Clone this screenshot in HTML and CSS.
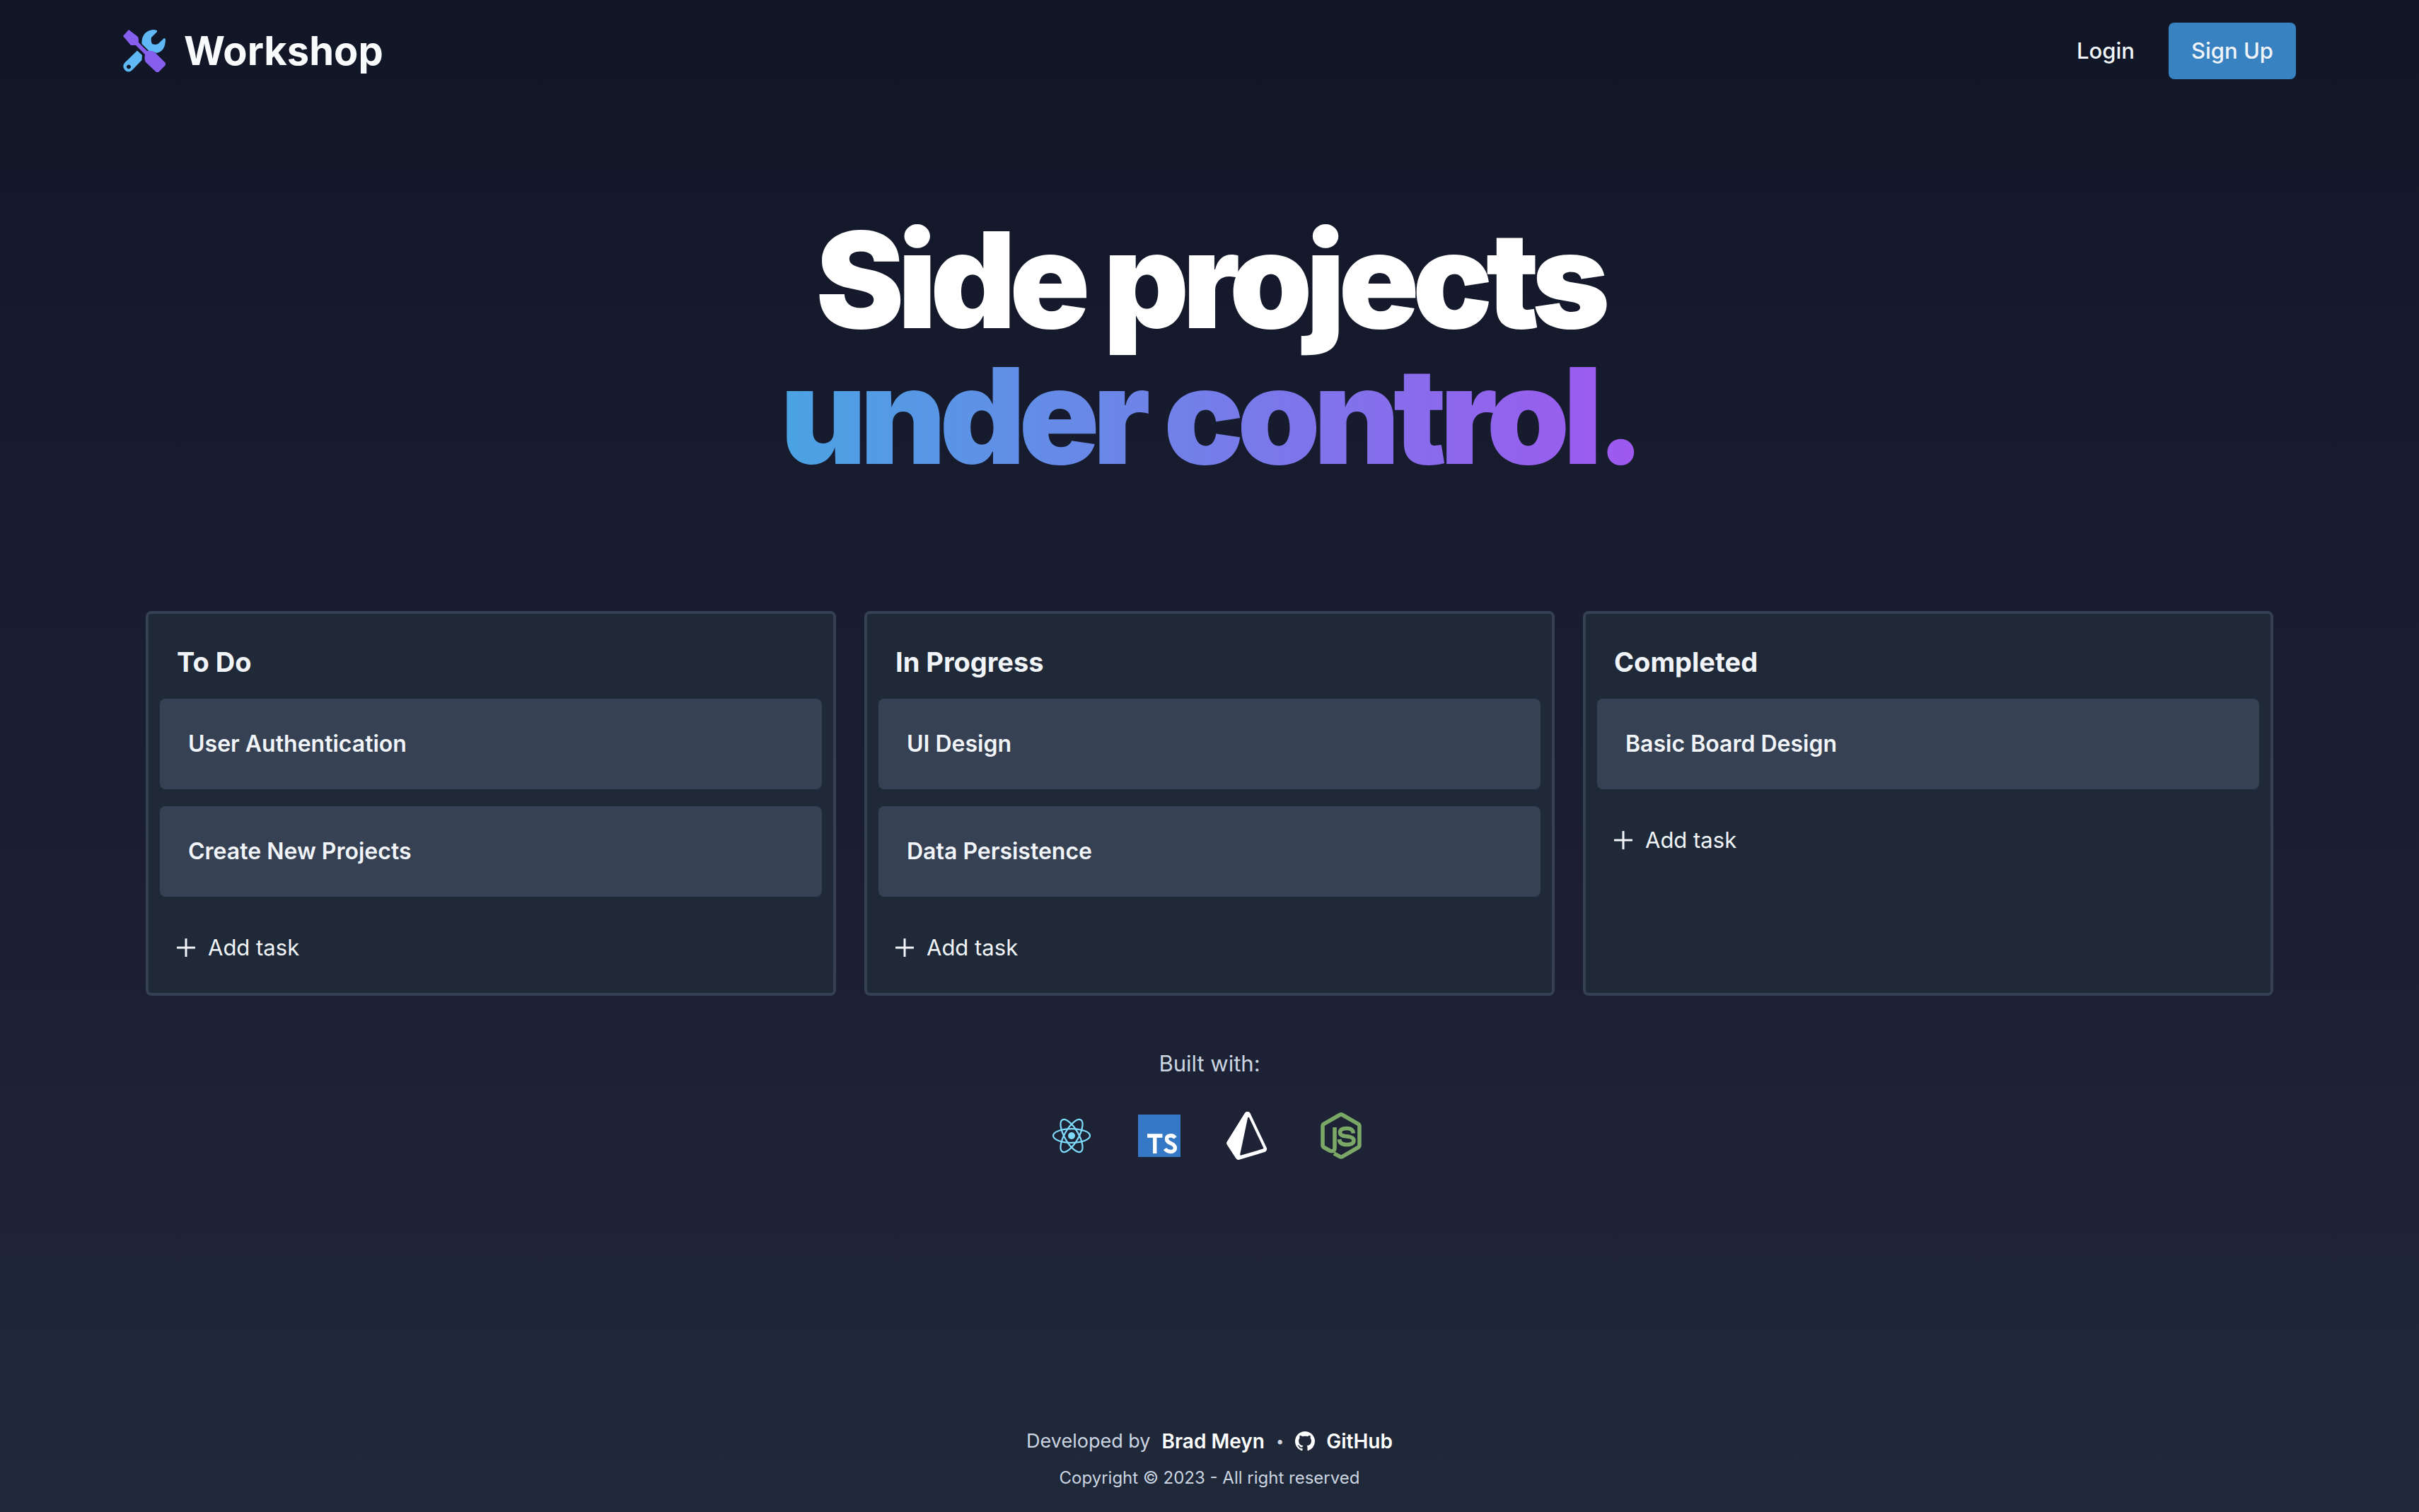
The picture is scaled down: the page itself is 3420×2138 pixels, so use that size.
FILE: index.html
```html
<!DOCTYPE html>
<html lang="en">
<head>
<meta charset="utf-8">
<meta name="viewport" content="width=device-width, initial-scale=1">
<title>Workshop</title>
<link rel="stylesheet" href="styles.css">
</head>
<body>
<header class="header">
  <a class="brand" href="#">
    <svg class="brand-icon" viewBox="0 0 60 60" aria-hidden="true">
      <path class="wrench" d="M20 29.500L27 36Q26.500 41 26.500 43L13 57Q7.500 62 2.500 57Q-2 51.500 2.500 46.500ZM8 49.500a3 3 0 1 0 .01 0ZM26.500 16Q28 2 42 0Q45 0 48 1V3L40 11Q39 16 41 20Q46 22 49.500 20L58 12L60 13Q60 31 47 33Q44 30.500 37 30.500L26.500 20Z"/>
      <path class="driver" d="M8 0L21 10Q22 12 22 18L34 30Q41 29 45 32L60 47V50L50 60H47L32 46Q29.500 42 31 35L18 22H11L0 9Z"/>
    </svg>
    <span>Workshop</span>
  </a>
  <nav class="nav">
    <a class="login" href="#">Login</a>
    <button class="signup" type="button">Sign Up</button>
  </nav>
</header>

<main class="main">
  <h1 class="hero">Side projects<br><span class="hero-accent">under control.</span></h1>

  <div class="boards">
    <section class="board">
      <h2 class="board-title">To Do</h2>
      <ul class="tasks">
        <li class="task">User Authentication</li>
        <li class="task">Create New Projects</li>
      </ul>
      <button class="add" type="button"><svg class="plus" viewBox="0 0 26 26" aria-hidden="true"><path d="M13 1V25M1 13H25"/></svg>Add task</button>
    </section>
    <section class="board">
      <h2 class="board-title">In Progress</h2>
      <ul class="tasks">
        <li class="task">UI Design</li>
        <li class="task">Data Persistence</li>
      </ul>
      <button class="add" type="button"><svg class="plus" viewBox="0 0 26 26" aria-hidden="true"><path d="M13 1V25M1 13H25"/></svg>Add task</button>
    </section>
    <section class="board">
      <h2 class="board-title">Completed</h2>
      <ul class="tasks">
        <li class="task">Basic Board Design</li>
      </ul>
      <button class="add" type="button"><svg class="plus" viewBox="0 0 26 26" aria-hidden="true"><path d="M13 1V25M1 13H25"/></svg>Add task</button>
    </section>
  </div>

  <section class="built">
    <p class="built-label">Built with:</p>
    <div class="stack">
      <svg class="tech react" viewBox="-30 -34 60 68" role="img" aria-label="React">
        <circle r="5" fill="#7fdbfb"/>
        <g fill="none" stroke="#7fdbfb" stroke-width="2.200">
          <ellipse rx="26" ry="9.800"/>
          <ellipse rx="26" ry="9.800" transform="rotate(60)"/>
          <ellipse rx="26" ry="9.800" transform="rotate(120)"/>
        </g>
      </svg>
      <svg class="tech ts" viewBox="0 -4 60 68" role="img" aria-label="TypeScript">
        <path fill="#3578c6" d="M0 0h60v60H0z"/>
        <path fill="none" stroke="#fff" stroke-width="5.400" d="M13 30H34.500M23.700 30V55M52.500 33Q50 29.500 46 29.700Q40 30.200 40.500 35Q41 38.500 46 40.500Q53 43.500 52.500 48Q51.500 52.500 46 52.500Q41 52.500 38 48.500"/>
      </svg>
      <svg class="tech prisma" viewBox="0 0 58 68" role="img" aria-label="Prisma">
        <path fill="#fff" fill-rule="evenodd" d="M56.500 50.500L33.600 2.300A4.400 4.400 0 0 0 26 1.700L.8 42.200A4.300 4.300 0 0 0 .9 46.800L13.200 65.700A4.600 4.600 0 0 0 18.300 67.700L54.100 57A4.500 4.500 0 0 0 56.500 50.500ZM51.300 52.600L20.900 61.600C20 61.900 19 61.100 19.200 60.200L30.100 8.500C30.300 7.500 31.600 7.400 32 8.300L52.100 50.600A1.400 1.400 0 0 1 51.300 52.600Z"/>
      </svg>
      <svg class="tech node" viewBox="0 0 58 68" role="img" aria-label="Node.js">
        <g fill="none" stroke="#7ba866" stroke-width="5.600" stroke-linejoin="round">
          <path d="M20 22V50Q20 58 13 55L5 50.500Q3 49.300 3 47V20.500Q3 18.400 5 17.200L27 4.500Q29 3.300 31 4.500L53 17.200Q55 18.400 55 20.500V47Q55 49.300 53 50.500L31 63.300Q29 64.500 27 63.300L19 59"/>
          <path d="M46.500 30.500Q46 23.500 37 23.500Q27.500 23.500 27.500 29.500Q27.500 34 36 34.700Q47 35.500 47 40.500Q47 46.500 37 46.500Q27 46.500 26.500 39"/>
        </g>
      </svg>
    </div>
  </section>
</main>

<footer class="footer">
  <p class="credit">
    <span>Developed by</span>
    <a class="credit-link" href="#">Brad Meyn</a>
    <span class="dot">•</span>
    <a class="credit-link" href="#">
      <svg class="github" viewBox="0 0 16 16" aria-hidden="true"><path fill="currentColor" d="M8 0C3.580 0 0 3.580 0 8c0 3.540 2.290 6.530 5.470 7.590.4.070.55-.17.55-.38 0-.19-.01-.82-.01-1.490-2.010.37-2.530-.49-2.690-.94-.09-.23-.48-.94-.82-1.130-.28-.15-.68-.52-.01-.53.63-.01 1.080.58 1.230.82.72 1.210 1.870.87 2.330.66.070-.52.28-.87.51-1.070-1.780-.2-3.640-.89-3.640-3.950 0-.87.31-1.590.82-2.150-.08-.2-.36-1.020.08-2.120 0 0 .67-.21 2.200.82.64-.18 1.320-.27 2-.27s1.360.09 2 .27c1.530-1.040 2.200-.82 2.200-.82.44 1.100.16 1.920.08 2.120.51.56.82 1.270.82 2.150 0 3.070-1.870 3.750-3.650 3.950.29.25.54.73.54 1.480 0 1.070-.01 1.930-.01 2.200 0 .21.15.46.55.38A8.010 8.010 0 0 0 16 8c0-4.420-3.580-8-8-8z"/></svg>
      GitHub
    </a>
  </p>
  <p class="copyright">Copyright © 2023 - All right reserved</p>
</footer>
</body>
</html>
```
FILE: styles.css
```css
* {
  box-sizing: border-box;
}

body {
  display: flex;
  flex-direction: column;
  min-height: 100vh;
  margin: 0;
  background: linear-gradient(#101626, #141a2b 18%, #1c1f33 62%, #202939);
  color: #f1f5f9;
  font-family: Inter, "Liberation Sans", sans-serif;
  font-size: 31px;
  line-height: 48px;
}

h1, h2, p, ul {
  margin: 0;
  padding: 0;
}

a {
  color: inherit;
  text-decoration: none;
}

button {
  border: 0;
  background: none;
  color: inherit;
  font: inherit;
  cursor: pointer;
}

.header {
  display: flex;
  align-items: center;
  justify-content: space-between;
  width: 100%;
  max-width: 3072px;
  margin: 0 auto;
  padding: 32px 0;
}

.brand {
  display: flex;
  align-items: center;
  gap: 26px;
  color: #f8fafc;
  font-size: 56px;
  font-weight: 700;
  line-height: 80px;
}

.brand-icon {
  width: 60px;
  height: 60px;
}

.wrench {
  fill: #60b8f4;
  fill-rule: evenodd;
}

.driver {
  fill: #865fef;
}

.nav {
  display: flex;
  align-items: center;
  gap: 48px;
  font-weight: 500;
}

.signup {
  padding: 16px 32px;
  border-radius: 8px;
  background: #3982c2;
}

.main {
  width: 100%;
  max-width: 3072px;
  margin: 0 auto;
  padding: 156px 32px 0;
}

.hero {
  color: #fff;
  font-size: 188px;
  font-weight: 900;
  letter-spacing: -0.05em;
  line-height: 192px;
  text-align: center;
}

.hero-accent {
  background: linear-gradient(to right, #4aa3e3, #9f58ef);
  background-clip: text;
  -webkit-background-clip: text;
  color: transparent;
}

.boards {
  display: grid;
  grid-template-columns: repeat(3, 1fr);
  gap: 40px;
  margin-top: 180px;
}

.board {
  padding: 40px 16px;
  border: 4px solid #354052;
  border-radius: 8px;
  background: #202938;
}

.board-title {
  padding: 0 24px;
  font-size: 38px;
  font-weight: 700;
  line-height: 56px;
}

.tasks {
  display: grid;
  gap: 24px;
  margin-top: 24px;
  list-style: none;
}

.task {
  padding: 40px;
  border-radius: 8px;
  background: #364153;
  font-size: 32px;
  font-weight: 600;
}

.add {
  display: flex;
  align-items: center;
  gap: 18px;
  margin-top: 48px;
  padding: 0 24px;
}

.plus {
  width: 26px;
  height: 26px;
  fill: none;
  stroke: currentColor;
  stroke-width: 3;
  stroke-linecap: round;
}

.built {
  margin-top: 72px;
  color: #cbd5e1;
  text-align: center;
}

.stack {
  display: flex;
  align-items: center;
  justify-content: center;
  gap: 64px;
  margin-top: 44px;
}

.tech {
  width: 60px;
  height: 68px;
}

.node {
  width: 78px;
}

.footer {
  margin-top: auto;
  padding-bottom: 32px;
  color: #cbd5e1;
  text-align: center;
}

.credit {
  display: flex;
  align-items: center;
  justify-content: center;
  gap: 16px;
  font-size: 27px;
  line-height: 40px;
}

.credit-link {
  display: flex;
  align-items: center;
  gap: 16px;
  color: #fff;
  font-size: 28px;
  font-weight: 600;
}

.dot {
  font-size: 20px;
}

.github {
  width: 28px;
  height: 28px;
}

.copyright {
  margin-top: 16px;
  font-size: 24px;
  line-height: 32px;
}
```
